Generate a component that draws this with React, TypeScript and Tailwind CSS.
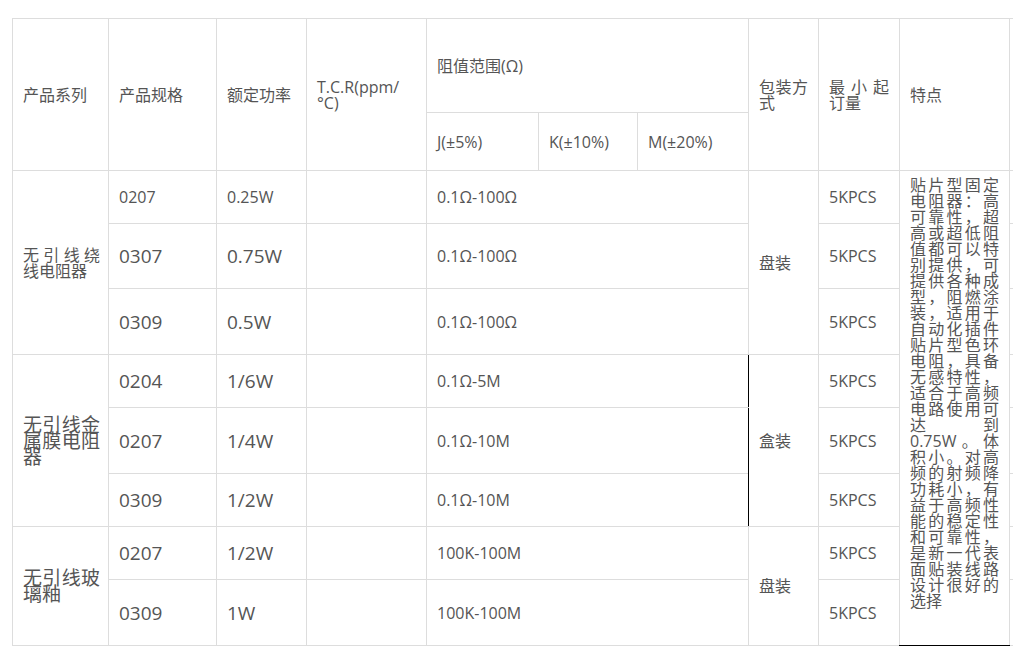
import React from 'react';

type Row = {
  spec: string;
  power: string;
  range: string;
  big: boolean;
};

const groups: { name: string; nameBig: boolean; pack: string; packBlack?: boolean; rows: Row[] }[] = [
  {
    name: '无引线绕线电阻器',
    nameBig: false,
    pack: '盘装',
    rows: [
      { spec: '0207', power: '0.25W', range: '0.1Ω-100Ω', big: false },
      { spec: '0307', power: '0.75W', range: '0.1Ω-100Ω', big: true },
      { spec: '0309', power: '0.5W', range: '0.1Ω-100Ω', big: true },
    ],
  },
  {
    name: '无引线金属膜电阻器',
    nameBig: true,
    pack: '盒装',
    packBlack: true,
    rows: [
      { spec: '0204', power: '1/6W', range: '0.1Ω-5M', big: true },
      { spec: '0207', power: '1/4W', range: '0.1Ω-10M', big: true },
      { spec: '0309', power: '1/2W', range: '0.1Ω-10M', big: true },
    ],
  },
  {
    name: '无引线玻璃釉',
    nameBig: true,
    pack: '盘装',
    rows: [
      { spec: '0207', power: '1/2W', range: '100K-100M', big: true },
      { spec: '0309', power: '1W', range: '100K-100M', big: true },
    ],
  },
];

// row heights as measured on the page
const rowHeights = ['h-[53px]', 'h-[65px]', 'h-[66px]', 'h-[53px]', 'h-[66px]', 'h-[53px]', 'h-[53px]', 'h-[66px]'];

const features =
  '贴片型固定电阻器：高可靠性，超高或超低阻值都可以特别提供，可提供各种成型，阻燃涂装，适用于自动化插件贴片型色环电阻，具备无感特性，适合于高频电路使用可达到0.75W。体积小。对高频的射频降功耗小，有益于高频性能的稳定性和可靠性，是新一代表面贴装线路设计很好的选择';

// base cell, alignment is added per cell (text-left and text-justify would clash)
const td = 'border border-[#dddddd] pl-[10px] pr-[10px] align-middle font-normal';
const small = 'text-[16px] leading-[16px]';
const big = 'text-[19px] leading-[16px]';

export default function App() {
  let rowIndex = 0;

  return (
    <div
      lang="zh-CN"
      className="w-[1013px] h-[661px] overflow-hidden bg-white pl-[12px] pt-[18px] font-['Open_Sans','Noto_Sans_CJK_SC',sans-serif] text-[#555555]"
    >
      <table className="w-[1057px] table-fixed border-collapse">
        <colgroup>
          <col className="w-[96px]" />
          <col className="w-[108px]" />
          <col className="w-[90px]" />
          <col className="w-[120px]" />
          <col className="w-[112px]" />
          <col className="w-[99px]" />
          <col className="w-[111px]" />
          <col className="w-[70px]" />
          <col className="w-[81px]" />
          <col className="w-[110px]" />
          <col className="w-[60px]" />
        </colgroup>
        <thead>
          <tr className="h-[94px]">
            <th rowSpan={2} className={`${td} ${small} text-left`}>产品系列</th>
            <th rowSpan={2} className={`${td} ${small} text-left`}>产品规格</th>
            <th rowSpan={2} className={`${td} ${small} text-left`}>额定功率</th>
            <th rowSpan={2} className={`${td} ${small} text-left`}>
              T.C.R(ppm/
              <br />
              °C)
            </th>
            <th colSpan={3} className={`${td} ${small} text-left`}>阻值范围(Ω)</th>
            <th rowSpan={2} className={`${td} ${small} text-justify`}>包装方式</th>
            <th rowSpan={2} className={`${td} ${small} text-justify`}>最小起订量</th>
            <th rowSpan={2} className={`${td} ${small} text-left`}>特点</th>
            <th rowSpan={2} className={td}></th>
          </tr>
          <tr className="h-[58px]">
            <th className={`${td} ${small} text-left`}>J(±5%)</th>
            <th className={`${td} ${small} text-left`}>K(±10%)</th>
            <th className={`${td} ${small} text-left`}>M(±20%)</th>
          </tr>
        </thead>
        <tbody>
          {groups.map((group, gi) =>
            group.rows.map((row, ri) => {
              const idx = rowIndex++;
              return (
                <tr key={`${gi}-${ri}`} className={rowHeights[idx]}>
                  {ri === 0 && (
                    <td
                      rowSpan={group.rows.length}
                      className={`${td} ${group.nameBig ? big : small} text-justify !pr-[8px]`}
                    >
                      {group.name}
                    </td>
                  )}
                  <td className={`${td} ${row.big ? big : small} text-left`}>{row.spec}</td>
                  <td className={`${td} ${row.big ? big : small} text-left`}>{row.power}</td>
                  <td className={td}></td>
                  <td colSpan={3} className={`${td} ${small} text-left ${group.packBlack ? 'border-r-black' : ''}`}>
                    {row.range}
                  </td>
                  {ri === 0 && (
                    <td
                      rowSpan={group.rows.length}
                      className={`${td} ${small} text-left ${group.packBlack ? 'border-l-black' : ''}`}
                    >
                      {group.pack}
                    </td>
                  )}
                  <td className={`${td} ${small} text-left`}>5KPCS</td>
                  {idx === 0 && (
                    <td
                      rowSpan={8}
                      className={`${td} ${small} align-top pt-[6px] text-justify border-b-black`}
                    >
                      {features}
                    </td>
                  )}
                  <td className={td}></td>
                </tr>
              );
            })
          )}
        </tbody>
      </table>
    </div>
  );
}
